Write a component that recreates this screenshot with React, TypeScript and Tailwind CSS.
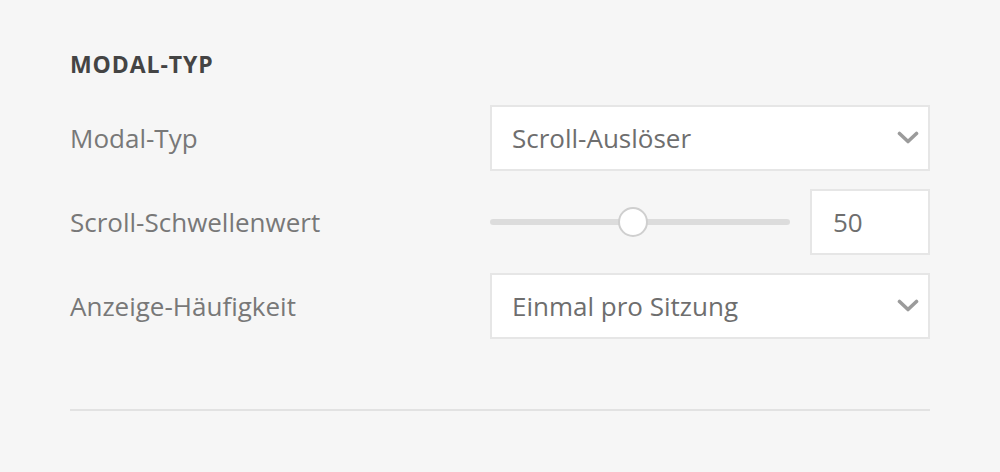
import { useState } from 'react';

const labelCls = "text-[26px] leading-none text-[#787878]";

function Chevron() {
  return (
    <svg width="22" height="14" viewBox="0 0 22 14" className="shrink-0">
      <path d="M2.5 2.5 L11 10.5 L19.5 2.5" fill="none" stroke="#9b9b9b" strokeWidth="3.6" strokeLinecap="round" strokeLinejoin="round" />
    </svg>
  );
}

function SelectBox({ value }: { value: string }) {
  return (
    <div className="flex h-[66px] w-[440px] items-center justify-between border-2 border-[#e6e6e6] bg-white pl-[20px] pr-[9px]">
      <span className="text-[26px] leading-none text-[#6e6e6e]">{value}</span>
      <Chevron />
    </div>
  );
}

function Slider({ value }: { value: number }) {
  // thumb sits at value% of usable track
  const left = 128 + (value - 50) * 2.72;
  return (
    <div className="relative h-[30px] w-[300px]">
      <div className="absolute left-0 right-0 top-[12px] h-[6px] rounded-full bg-[#dcdcdc]" />
      <div
        className="absolute top-0 h-[30px] w-[30px] rounded-full border-2 border-[#cfcfcf] bg-white"
        style={{ left }}
      />
    </div>
  );
}

export default function App() {
  const [threshold] = useState(50);

  return (
    <div className="min-h-[472px] w-full bg-[#f6f6f6] px-[70px] pt-[53px]" style={{ fontFamily: '"Open Sans", "Liberation Sans", sans-serif' }}>
      <h2 className="text-[23px] font-bold leading-none tracking-[0.04em] text-[#444]">MODAL-TYP</h2>

      <div className="mt-[29px] flex flex-col gap-[18px]">
        <div className="flex items-center justify-between">
          <span className={labelCls}>Modal-Typ</span>
          <SelectBox value="Scroll-Auslöser" />
        </div>

        <div className="flex items-center justify-between">
          <span className={labelCls}>Scroll-Schwellenwert</span>
          <div className="flex w-[440px] items-center justify-between">
            <Slider value={threshold} />
            <div className="flex h-[66px] w-[120px] items-center border-2 border-[#e6e6e6] bg-white pl-[21px]">
              <span className="text-[26px] leading-none text-[#6e6e6e]">{threshold}</span>
            </div>
          </div>
        </div>

        <div className="flex items-center justify-between">
          <span className={labelCls}>Anzeige-Häufigkeit</span>
          <SelectBox value="Einmal pro Sitzung" />
        </div>
      </div>

      <div className="mt-[70px] h-[2px] w-full bg-[#e2e2e2]" />
    </div>
  );
}
